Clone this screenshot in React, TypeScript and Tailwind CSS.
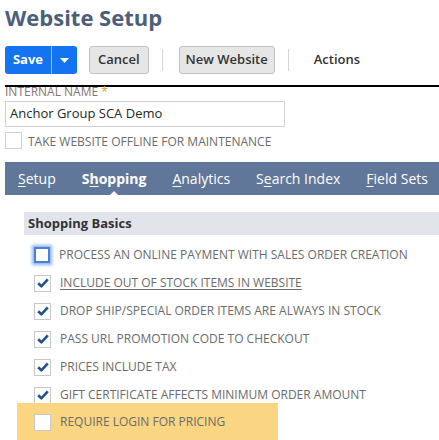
import React from "react";

const font = { fontFamily: '"Open Sans", "Liberation Sans", sans-serif' };

type Option = { label: string; checked: boolean; link?: boolean; focused?: boolean; highlight?: boolean };

const options: Option[] = [
  { label: "Process an online payment with sales order creation", checked: false, focused: true },
  { label: "Include out of stock items in website", checked: true, link: true },
  { label: "Drop ship/special order items are always in stock", checked: true },
  { label: "Pass URL promotion code to checkout", checked: true },
  { label: "Prices include tax", checked: true },
  { label: "Gift certificate affects minimum order amount", checked: true },
  { label: "Require login for pricing", checked: false, highlight: true },
];

// access key letter is underlined inside each tab label
const tabs = [
  { pre: "", key: "S", rest: "etup", active: false },
  { pre: "S", key: "h", rest: "opping", active: true },
  { pre: "", key: "A", rest: "nalytics", active: false },
  { pre: "S", key: "e", rest: "arch Index", active: false },
  { pre: "", key: "F", rest: "ield Sets", active: false },
];

const Check = ({ checked, focused }: { checked: boolean; focused?: boolean }) => {
  if (focused) {
    return (
      <span className="w-[16px] h-[16px] shrink-0 border-2 border-[#4a7fd4] bg-white shadow-[0_0_3px_2px_rgba(90,150,240,0.7)]" />
    );
  }
  return (
    <span className="w-[17px] h-[17px] shrink-0 border border-[#c8c8c8] bg-white flex items-center justify-center">
      {checked && (
        <svg width="12" height="10" viewBox="0 0 12 10">
          <path d="M1.2 5.2 L4.4 8.3 L10.8 1.4" fill="none" stroke="#24508f" strokeWidth="2.6" strokeLinejoin="round" />
        </svg>
      )}
    </span>
  );
};

export default function App() {
  return (
    <div className="w-[439px] h-[440px] overflow-hidden bg-white" style={font}>
      <h1 className="pl-[5px] pt-[1px] text-[22px] font-bold leading-[32px] text-[#4d5e79]">Website Setup</h1>

      {/* toolbar */}
      <div className="flex items-center h-[28px] mt-[13px] pl-[5px]">
        <div className="flex h-[28px] rounded-[3px] bg-[#1373f0] text-white">
          <button className="w-[46px] text-[13px] font-bold">Save</button>
          <span className="w-px bg-[#9cc3f7]" />
          <button className="w-[25px] flex items-center justify-center">
            <svg width="9" height="5" viewBox="0 0 9 5">
              <path d="M0 0 H9 L4.5 5 Z" fill="#fff" />
            </svg>
          </button>
        </div>
        <button className="ml-[12px] h-[28px] px-[8px] rounded-[3px] border border-[#c2c2c2] bg-[#e6e6e6] text-[13px] font-semibold text-[#333]">
          Cancel
        </button>
        <span className="ml-[13px] w-px h-[22px] bg-[#d4d4d4]" />
        <button className="ml-[16px] h-[28px] px-[6px] rounded-[3px] border border-[#c2c2c2] bg-[#e6e6e6] text-[13px] font-semibold text-[#333]">
          New Website
        </button>
        <span className="ml-[13px] w-px h-[22px] bg-[#d4d4d4]" />
        <span className="ml-[25px] text-[13px] font-semibold text-[#333]">Actions</span>
      </div>

      {/* internal name */}
      <div className="mt-[11px] ml-[5px] border-t-2 border-black">
        <div className="-mt-[2px] text-[12px] leading-[14px] text-[#8a736d]">
          INTERNAL NAME <span className="text-[#e29a2d]">*</span>
        </div>
      </div>
      <div className="ml-[5px] mt-[2px] w-[280px] h-[26px] border border-[#d2d2d2] flex items-center px-[4px] text-[13px] text-[#262626]">
        Anchor Group SCA Demo
      </div>
      <div className="ml-[5px] mt-[5px] flex items-center gap-[6px] h-[17px]">
        <span className="w-[17px] h-[17px] border border-[#d0d0d0] bg-white" />
        <span className="text-[12px] text-[#6b6b6b] translate-y-[1px]">TAKE WEBSITE OFFLINE FOR MAINTENANCE</span>
      </div>

      {/* tabs */}
      <div className="ml-[5px] mt-[13px] h-[33px] bg-[#607799] flex items-center pl-[13px] gap-[26px] text-[14px] text-white">
        {tabs.map((t, i) => (
          <span key={i} className={t.active ? "relative font-bold" : "relative"}>
            {t.pre}
            <span className="underline underline-offset-[2px]">{t.key}</span>
            {t.rest}
            {t.active && (
              <span className="absolute left-1/2 -translate-x-1/2 top-[23px] w-0 h-0 border-x-[6px] border-x-transparent border-b-[6px] border-b-white" />
            )}
          </span>
        ))}
      </div>

      {/* shopping basics */}
      <div className="ml-[24px] mt-[17px] h-[23px] bg-[#e1e5eb] flex items-center pl-[4px] text-[13px] font-bold text-[#333]">
        Shopping Basics
      </div>
      <div className="mt-[6px] flex flex-col">
        {options.map((o) => (
          <div
            key={o.label}
            className={
              o.highlight
                ? "ml-[17px] -mt-[6px] w-[261px] h-[38px] pl-[17px] bg-[#fad582] flex items-center gap-[9px]"
                : "ml-[34px] h-[28px] flex items-center gap-[9px]"
            }
          >
            <Check checked={o.checked} focused={o.focused} />
            <span
              className={
                o.link
                  ? "text-[12px] uppercase text-[#6b6b6b] underline underline-offset-[2px]"
                  : "text-[12px] uppercase text-[#6b6b6b]"
              }
            >
              {o.label}
            </span>
          </div>
        ))}
      </div>
    </div>
  );
}
